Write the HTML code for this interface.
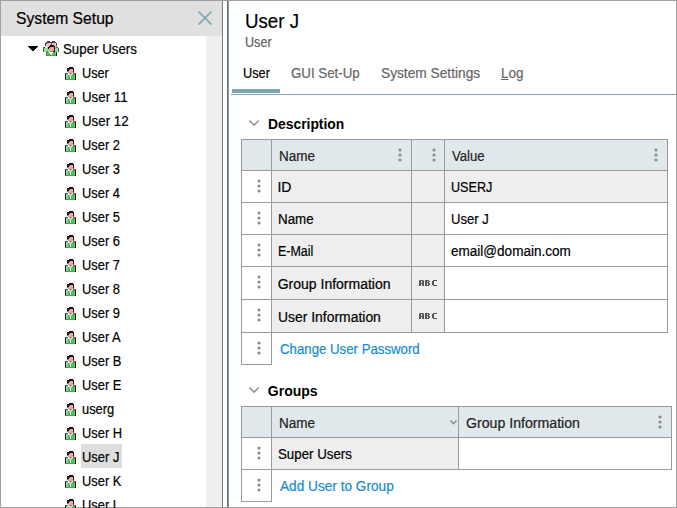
<!DOCTYPE html>
<html><head><meta charset="utf-8">
<style>
html,body{margin:0;padding:0;}
body{width:677px;height:508px;position:relative;overflow:hidden;background:#fff;font-family:"Liberation Sans",sans-serif;color:#000;}
.a{position:absolute;}
.t{position:absolute;white-space:pre;line-height:1;transform-origin:0 0;-webkit-text-stroke:0.2px currentColor;}
#frame{position:absolute;left:0;top:0;width:675px;height:506px;border:1px solid #a0a0a0;}
</style></head><body>
<svg width="0" height="0" style="position:absolute">
<defs>
<symbol id="usr" viewBox="0 0 11 13" shape-rendering="crispEdges"><rect x="4" y="0" width="4" height="1" fill="#161616"/><rect x="2" y="1" width="7" height="1" fill="#161616"/><rect x="2" y="2" width="3" height="1" fill="#161616"/><rect x="5" y="2" width="1" height="1" fill="#fcd0d0"/><rect x="6" y="2" width="2" height="1" fill="#f3a0a0"/><rect x="8" y="2" width="1" height="1" fill="#161616"/><rect x="2" y="3" width="2" height="1" fill="#161616"/><rect x="4" y="3" width="1" height="1" fill="#fcd0d0"/><rect x="5" y="3" width="3" height="1" fill="#f3a0a0"/><rect x="8" y="3" width="1" height="1" fill="#161616"/><rect x="2" y="4" width="1" height="1" fill="#5a5a5a"/><rect x="3" y="4" width="5" height="1" fill="#f3a0a0"/><rect x="8" y="4" width="1" height="1" fill="#161616"/><rect x="3" y="5" width="5" height="1" fill="#f3a0a0"/><rect x="8" y="5" width="1" height="1" fill="#5a5a5a"/><rect x="0" y="6" width="3" height="1" fill="#5a5a5a"/><rect x="3" y="6" width="1" height="1" fill="#ffffff"/><rect x="4" y="6" width="3" height="1" fill="#8a8a8a"/><rect x="7" y="6" width="1" height="1" fill="#ffffff"/><rect x="8" y="6" width="3" height="1" fill="#5a5a5a"/><rect x="0" y="7" width="1" height="1" fill="#161616"/><rect x="1" y="7" width="2" height="1" fill="#94dd94"/><rect x="3" y="7" width="2" height="1" fill="#ffffff"/><rect x="5" y="7" width="1" height="1" fill="#8a8a8a"/><rect x="6" y="7" width="1" height="1" fill="#ffffff"/><rect x="7" y="7" width="3" height="1" fill="#5cbf5e"/><rect x="10" y="7" width="1" height="1" fill="#161616"/><rect x="0" y="8" width="1" height="1" fill="#161616"/><rect x="1" y="8" width="2" height="1" fill="#94dd94"/><rect x="3" y="8" width="2" height="1" fill="#5cbf5e"/><rect x="5" y="8" width="1" height="1" fill="#ffffff"/><rect x="6" y="8" width="4" height="1" fill="#5cbf5e"/><rect x="10" y="8" width="1" height="1" fill="#161616"/><rect x="0" y="9" width="1" height="1" fill="#161616"/><rect x="1" y="9" width="2" height="1" fill="#94dd94"/><rect x="3" y="9" width="2" height="1" fill="#5cbf5e"/><rect x="5" y="9" width="1" height="1" fill="#ffffff"/><rect x="6" y="9" width="4" height="1" fill="#5cbf5e"/><rect x="10" y="9" width="1" height="1" fill="#161616"/><rect x="0" y="10" width="1" height="1" fill="#161616"/><rect x="1" y="10" width="1" height="1" fill="#94dd94"/><rect x="2" y="10" width="3" height="1" fill="#5cbf5e"/><rect x="5" y="10" width="1" height="1" fill="#ffffff"/><rect x="6" y="10" width="4" height="1" fill="#5cbf5e"/><rect x="10" y="10" width="1" height="1" fill="#161616"/><rect x="0" y="11" width="1" height="1" fill="#161616"/><rect x="1" y="11" width="1" height="1" fill="#94dd94"/><rect x="2" y="11" width="3" height="1" fill="#5cbf5e"/><rect x="5" y="11" width="1" height="1" fill="#ffffff"/><rect x="6" y="11" width="4" height="1" fill="#5cbf5e"/><rect x="10" y="11" width="1" height="1" fill="#161616"/><rect x="0" y="12" width="1" height="1" fill="#5a5a5a"/><rect x="1" y="12" width="9" height="1" fill="#45a847"/><rect x="10" y="12" width="1" height="1" fill="#161616"/></symbol>
<symbol id="grp" viewBox="0 0 16 15" shape-rendering="crispEdges"><rect x="4" y="0" width="3" height="1" fill="#484848"/><rect x="9" y="0" width="3" height="1" fill="#484848"/><rect x="3" y="1" width="10" height="1" fill="#484848"/><rect x="2" y="2" width="2" height="1" fill="#484848"/><rect x="4" y="2" width="4" height="1" fill="#f7b8b8"/><rect x="8" y="2" width="1" height="1" fill="#484848"/><rect x="9" y="2" width="4" height="1" fill="#f7b8b8"/><rect x="13" y="2" width="1" height="1" fill="#484848"/><rect x="2" y="3" width="1" height="1" fill="#484848"/><rect x="3" y="3" width="5" height="1" fill="#f7b8b8"/><rect x="8" y="3" width="1" height="1" fill="#484848"/><rect x="9" y="3" width="4" height="1" fill="#f7b8b8"/><rect x="13" y="3" width="1" height="1" fill="#484848"/><rect x="2" y="4" width="1" height="1" fill="#484848"/><rect x="3" y="4" width="4" height="1" fill="#f7b8b8"/><rect x="7" y="4" width="4" height="1" fill="#161616"/><rect x="11" y="4" width="2" height="1" fill="#f7b8b8"/><rect x="13" y="4" width="1" height="1" fill="#484848"/><rect x="4" y="5" width="2" height="1" fill="#f7b8b8"/><rect x="6" y="5" width="6" height="1" fill="#161616"/><rect x="12" y="5" width="2" height="1" fill="#f7b8b8"/><rect x="0" y="6" width="2" height="1" fill="#5a5a5a"/><rect x="2" y="6" width="1" height="1" fill="#94dd94"/><rect x="3" y="6" width="1" height="1" fill="#ffffff"/><rect x="4" y="6" width="1" height="1" fill="#94dd94"/><rect x="5" y="6" width="2" height="1" fill="#161616"/><rect x="7" y="6" width="4" height="1" fill="#f3a0a0"/><rect x="11" y="6" width="1" height="1" fill="#161616"/><rect x="12" y="6" width="1" height="1" fill="#94dd94"/><rect x="13" y="6" width="2" height="1" fill="#5a5a5a"/><rect x="0" y="7" width="1" height="1" fill="#5a5a5a"/><rect x="1" y="7" width="4" height="1" fill="#94dd94"/><rect x="5" y="7" width="1" height="1" fill="#161616"/><rect x="6" y="7" width="5" height="1" fill="#f3a0a0"/><rect x="11" y="7" width="1" height="1" fill="#161616"/><rect x="12" y="7" width="3" height="1" fill="#94dd94"/><rect x="15" y="7" width="1" height="1" fill="#5a5a5a"/><rect x="0" y="8" width="1" height="1" fill="#5a5a5a"/><rect x="1" y="8" width="5" height="1" fill="#94dd94"/><rect x="6" y="8" width="5" height="1" fill="#f3a0a0"/><rect x="11" y="8" width="1" height="1" fill="#161616"/><rect x="12" y="8" width="3" height="1" fill="#94dd94"/><rect x="15" y="8" width="1" height="1" fill="#5a5a5a"/><rect x="0" y="9" width="1" height="1" fill="#5a5a5a"/><rect x="1" y="9" width="6" height="1" fill="#94dd94"/><rect x="7" y="9" width="4" height="1" fill="#f3a0a0"/><rect x="11" y="9" width="1" height="1" fill="#161616"/><rect x="12" y="9" width="3" height="1" fill="#94dd94"/><rect x="15" y="9" width="1" height="1" fill="#5a5a5a"/><rect x="0" y="10" width="1" height="1" fill="#5a5a5a"/><rect x="1" y="10" width="3" height="1" fill="#94dd94"/><rect x="4" y="10" width="1" height="1" fill="#5a5a5a"/><rect x="5" y="10" width="2" height="1" fill="#94dd94"/><rect x="7" y="10" width="3" height="1" fill="#8a8a8a"/><rect x="10" y="10" width="2" height="1" fill="#161616"/><rect x="12" y="10" width="3" height="1" fill="#94dd94"/><rect x="15" y="10" width="1" height="1" fill="#5a5a5a"/><rect x="3" y="11" width="1" height="1" fill="#5a5a5a"/><rect x="4" y="11" width="2" height="1" fill="#5cbf5e"/><rect x="6" y="11" width="4" height="1" fill="#ffffff"/><rect x="10" y="11" width="3" height="1" fill="#5cbf5e"/><rect x="13" y="11" width="1" height="1" fill="#161616"/><rect x="3" y="12" width="1" height="1" fill="#5a5a5a"/><rect x="4" y="12" width="3" height="1" fill="#5cbf5e"/><rect x="7" y="12" width="2" height="1" fill="#ffffff"/><rect x="9" y="12" width="4" height="1" fill="#5cbf5e"/><rect x="13" y="12" width="1" height="1" fill="#161616"/><rect x="3" y="13" width="1" height="1" fill="#5a5a5a"/><rect x="4" y="13" width="4" height="1" fill="#5cbf5e"/><rect x="8" y="13" width="1" height="1" fill="#ffffff"/><rect x="9" y="13" width="4" height="1" fill="#5cbf5e"/><rect x="13" y="13" width="1" height="1" fill="#161616"/><rect x="3" y="14" width="1" height="1" fill="#5a5a5a"/><rect x="4" y="14" width="9" height="1" fill="#45a847"/><rect x="13" y="14" width="1" height="1" fill="#161616"/></symbol>
<symbol id="keb" viewBox="0 0 4 14">
<circle cx="2" cy="2" r="1.6" fill="#8c8c8c"/>
<circle cx="2" cy="7" r="1.6" fill="#8c8c8c"/>
<circle cx="2" cy="12" r="1.6" fill="#8c8c8c"/>
</symbol>
<symbol id="abc" viewBox="0 0 18 6" shape-rendering="crispEdges"><rect x="0" y="0" width="1" height="1" fill="#999"/><rect x="1" y="0" width="1" height="1" fill="#555"/><rect x="2" y="0" width="1" height="1" fill="#555"/><rect x="3" y="0" width="1" height="1" fill="#555"/><rect x="4" y="0" width="1" height="1" fill="#999"/><rect x="0" y="1" width="1" height="1" fill="#555"/><rect x="1" y="1" width="1" height="1" fill="#555"/><rect x="3" y="1" width="1" height="1" fill="#555"/><rect x="4" y="1" width="1" height="1" fill="#555"/><rect x="0" y="2" width="1" height="1" fill="#555"/><rect x="1" y="2" width="1" height="1" fill="#555"/><rect x="3" y="2" width="1" height="1" fill="#555"/><rect x="4" y="2" width="1" height="1" fill="#555"/><rect x="0" y="3" width="1" height="1" fill="#555"/><rect x="1" y="3" width="1" height="1" fill="#555"/><rect x="2" y="3" width="1" height="1" fill="#555"/><rect x="3" y="3" width="1" height="1" fill="#555"/><rect x="4" y="3" width="1" height="1" fill="#555"/><rect x="0" y="4" width="1" height="1" fill="#555"/><rect x="1" y="4" width="1" height="1" fill="#555"/><rect x="3" y="4" width="1" height="1" fill="#555"/><rect x="4" y="4" width="1" height="1" fill="#555"/><rect x="0" y="5" width="1" height="1" fill="#555"/><rect x="1" y="5" width="1" height="1" fill="#555"/><rect x="3" y="5" width="1" height="1" fill="#555"/><rect x="4" y="5" width="1" height="1" fill="#555"/><rect x="6" y="0" width="1" height="1" fill="#555"/><rect x="7" y="0" width="1" height="1" fill="#555"/><rect x="8" y="0" width="1" height="1" fill="#555"/><rect x="9" y="0" width="1" height="1" fill="#555"/><rect x="6" y="1" width="1" height="1" fill="#555"/><rect x="7" y="1" width="1" height="1" fill="#555"/><rect x="9" y="1" width="1" height="1" fill="#555"/><rect x="10" y="1" width="1" height="1" fill="#555"/><rect x="6" y="2" width="1" height="1" fill="#555"/><rect x="7" y="2" width="1" height="1" fill="#555"/><rect x="8" y="2" width="1" height="1" fill="#555"/><rect x="9" y="2" width="1" height="1" fill="#555"/><rect x="6" y="3" width="1" height="1" fill="#555"/><rect x="7" y="3" width="1" height="1" fill="#555"/><rect x="9" y="3" width="1" height="1" fill="#555"/><rect x="10" y="3" width="1" height="1" fill="#555"/><rect x="6" y="4" width="1" height="1" fill="#555"/><rect x="7" y="4" width="1" height="1" fill="#555"/><rect x="9" y="4" width="1" height="1" fill="#555"/><rect x="10" y="4" width="1" height="1" fill="#555"/><rect x="6" y="5" width="1" height="1" fill="#555"/><rect x="7" y="5" width="1" height="1" fill="#555"/><rect x="8" y="5" width="1" height="1" fill="#555"/><rect x="9" y="5" width="1" height="1" fill="#555"/><rect x="14" y="0" width="1" height="1" fill="#555"/><rect x="15" y="0" width="1" height="1" fill="#555"/><rect x="16" y="0" width="1" height="1" fill="#555"/><rect x="17" y="0" width="1" height="1" fill="#555"/><rect x="13" y="1" width="1" height="1" fill="#555"/><rect x="14" y="1" width="1" height="1" fill="#555"/><rect x="13" y="2" width="1" height="1" fill="#555"/><rect x="14" y="2" width="1" height="1" fill="#555"/><rect x="13" y="3" width="1" height="1" fill="#555"/><rect x="14" y="3" width="1" height="1" fill="#555"/><rect x="13" y="4" width="1" height="1" fill="#555"/><rect x="14" y="4" width="1" height="1" fill="#555"/><rect x="14" y="5" width="1" height="1" fill="#555"/><rect x="15" y="5" width="1" height="1" fill="#555"/><rect x="16" y="5" width="1" height="1" fill="#555"/><rect x="17" y="5" width="1" height="1" fill="#555"/></symbol>
</defs>
</svg>
<div id="frame"></div>
<div class="a" style="left:1px;top:1px;width:221px;height:35px;background:#e0e0e0;"></div>
<div class="t" style="left:16px;top:10px;font-size:16.5px;transform:scaleX(0.950);">System Setup</div>
<svg class="a" style="left:198px;top:11px" width="14" height="14" viewBox="0 0 14 14"><path d="M0.5 0.5L13.5 13.5M13.5 0.5L0.5 13.5" stroke="#7fa9b3" stroke-width="1.8"/></svg>
<div class="a" style="left:206px;top:36px;width:16px;height:471px;background:#efefef;"></div>
<div class="a" style="left:221px;top:36px;width:1px;height:471px;background:#f5f5f5;"></div>
<div class="a" style="left:222px;top:1px;width:1px;height:506px;background:#777;"></div>
<div class="a" style="left:227px;top:1px;width:1px;height:506px;background:#6a6a6a;"></div>
<div class="a" style="left:228px;top:1px;width:1px;height:506px;background:#7ea4ab;"></div>
<svg class="a" style="left:28px;top:46px" width="10" height="5" viewBox="0 0 10 5" shape-rendering="crispEdges"><path d="M0 0H10V1H9V2H8V3H7V4H6V5H4V4H3V3H2V2H1V1H0Z" fill="#000"/></svg>
<svg class="a" style="left:43px;top:41px" width="16" height="15"><use href="#grp"/></svg>
<div class="t" style="left:63.2px;top:42px;font-size:14px;transform:scaleX(0.950);">Super Users</div>
<div class="a" style="left:81px;top:444px;width:41px;height:24px;background:#dedede;"></div>
<svg class="a" style="left:65px;top:67px" width="11" height="13"><use href="#usr"/></svg>
<div class="t" style="left:82px;top:66px;font-size:14px;transform:scaleX(0.908);">User</div>
<svg class="a" style="left:65px;top:91px" width="11" height="13"><use href="#usr"/></svg>
<div class="t" style="left:82px;top:90px;font-size:14px;transform:scaleX(0.950);">User 11</div>
<svg class="a" style="left:65px;top:115px" width="11" height="13"><use href="#usr"/></svg>
<div class="t" style="left:82px;top:114px;font-size:14px;transform:scaleX(0.950);">User 12</div>
<svg class="a" style="left:65px;top:139px" width="11" height="13"><use href="#usr"/></svg>
<div class="t" style="left:82px;top:138px;font-size:14px;transform:scaleX(0.921);">User 2</div>
<svg class="a" style="left:65px;top:163px" width="11" height="13"><use href="#usr"/></svg>
<div class="t" style="left:82px;top:162px;font-size:14px;transform:scaleX(0.921);">User 3</div>
<svg class="a" style="left:65px;top:187px" width="11" height="13"><use href="#usr"/></svg>
<div class="t" style="left:82px;top:186px;font-size:14px;transform:scaleX(0.921);">User 4</div>
<svg class="a" style="left:65px;top:211px" width="11" height="13"><use href="#usr"/></svg>
<div class="t" style="left:82px;top:210px;font-size:14px;transform:scaleX(0.921);">User 5</div>
<svg class="a" style="left:65px;top:235px" width="11" height="13"><use href="#usr"/></svg>
<div class="t" style="left:82px;top:234px;font-size:14px;transform:scaleX(0.921);">User 6</div>
<svg class="a" style="left:65px;top:259px" width="11" height="13"><use href="#usr"/></svg>
<div class="t" style="left:82px;top:258px;font-size:14px;transform:scaleX(0.921);">User 7</div>
<svg class="a" style="left:65px;top:283px" width="11" height="13"><use href="#usr"/></svg>
<div class="t" style="left:82px;top:282px;font-size:14px;transform:scaleX(0.921);">User 8</div>
<svg class="a" style="left:65px;top:307px" width="11" height="13"><use href="#usr"/></svg>
<div class="t" style="left:82px;top:306px;font-size:14px;transform:scaleX(0.921);">User 9</div>
<svg class="a" style="left:65px;top:331px" width="11" height="13"><use href="#usr"/></svg>
<div class="t" style="left:82px;top:330px;font-size:14px;transform:scaleX(0.921);">User A</div>
<svg class="a" style="left:65px;top:355px" width="11" height="13"><use href="#usr"/></svg>
<div class="t" style="left:82px;top:354px;font-size:14px;transform:scaleX(0.921);">User B</div>
<svg class="a" style="left:65px;top:379px" width="11" height="13"><use href="#usr"/></svg>
<div class="t" style="left:82px;top:378px;font-size:14px;transform:scaleX(0.921);">User E</div>
<svg class="a" style="left:65px;top:403px" width="11" height="13"><use href="#usr"/></svg>
<div class="t" style="left:82px;top:402px;font-size:14px;transform:scaleX(0.921);">userg</div>
<svg class="a" style="left:65px;top:427px" width="11" height="13"><use href="#usr"/></svg>
<div class="t" style="left:82px;top:426px;font-size:14px;transform:scaleX(0.921);">User H</div>
<svg class="a" style="left:65px;top:451px" width="11" height="13"><use href="#usr"/></svg>
<div class="t" style="left:82px;top:450px;font-size:14px;transform:scaleX(0.924);">User J</div>
<svg class="a" style="left:65px;top:475px" width="11" height="13"><use href="#usr"/></svg>
<div class="t" style="left:82px;top:474px;font-size:14px;transform:scaleX(0.921);">User K</div>
<svg class="a" style="left:65px;top:499px" width="11" height="13"><use href="#usr"/></svg>
<div class="t" style="left:82px;top:498px;font-size:14px;transform:scaleX(0.921);">User L</div>
<div class="t" style="left:245.2px;top:10px;font-size:21px;transform:scaleX(0.890);">User J</div>
<div class="t" style="left:245.3px;top:35px;font-size:14px;transform:scaleX(0.900);color:#606060;">User</div>
<div class="t" style="left:243px;top:66px;font-size:14px;transform:scaleX(0.910);">User</div>
<div class="t" style="left:291px;top:66px;font-size:14px;transform:scaleX(0.950);color:#666;">GUI Set-Up</div>
<div class="t" style="left:381px;top:66px;font-size:14px;transform:scaleX(0.980);color:#666;">System Settings</div>
<div class="t" style="left:501px;top:66px;font-size:14px;transform:scaleX(0.960);color:#666;"><u>L</u>og</div>
<div class="a" style="left:232px;top:89px;width:48px;height:4px;background:#7fa6ae;"></div>
<div class="a" style="left:231px;top:94px;width:445px;height:1px;background:#7fa6ae;"></div>
<svg class="a" style="left:249px;top:120px" width="10" height="7" viewBox="0 0 10 7"><path d="M0.4 0.5L5 5.1L9.6 0.5" stroke="#959595" stroke-width="1.5" fill="none"/></svg>
<div class="t" style="left:267.5px;top:116.5px;font-size:14px;transform:scaleX(0.990);font-weight:bold;-webkit-text-stroke:0;">Description</div>
<div class="a" style="left:242px;top:140px;width:425px;height:30px;background:#e1e8eb;"></div>
<div class="a" style="left:272px;top:171px;width:139px;height:31px;background:#eeeeee;"></div>
<div class="a" style="left:412px;top:171px;width:32px;height:31px;background:#eeeeee;"></div>
<div class="a" style="left:445px;top:171px;width:222px;height:31px;background:#eeeeee;"></div>
<div class="a" style="left:272px;top:203px;width:139px;height:31px;background:#eeeeee;"></div>
<div class="a" style="left:412px;top:203px;width:32px;height:31px;background:#eeeeee;"></div>
<div class="a" style="left:272px;top:235px;width:139px;height:31px;background:#eeeeee;"></div>
<div class="a" style="left:412px;top:235px;width:32px;height:31px;background:#eeeeee;"></div>
<div class="a" style="left:272px;top:267px;width:139px;height:32px;background:#eeeeee;"></div>
<div class="a" style="left:412px;top:267px;width:32px;height:32px;background:#eeeeee;"></div>
<div class="a" style="left:272px;top:300px;width:139px;height:32px;background:#eeeeee;"></div>
<div class="a" style="left:412px;top:300px;width:32px;height:32px;background:#eeeeee;"></div>
<div class="a" style="left:241px;top:139px;width:427px;height:1px;background:#9a9a9a;"></div>
<div class="a" style="left:241px;top:170px;width:427px;height:1px;background:#9a9a9a;"></div>
<div class="a" style="left:241px;top:202px;width:427px;height:1px;background:#9a9a9a;"></div>
<div class="a" style="left:241px;top:234px;width:427px;height:1px;background:#9a9a9a;"></div>
<div class="a" style="left:241px;top:266px;width:427px;height:1px;background:#9a9a9a;"></div>
<div class="a" style="left:241px;top:299px;width:427px;height:1px;background:#9a9a9a;"></div>
<div class="a" style="left:241px;top:332px;width:427px;height:1px;background:#9a9a9a;"></div>
<div class="a" style="left:241px;top:139px;width:1px;height:194px;background:#9a9a9a;"></div>
<div class="a" style="left:271px;top:139px;width:1px;height:194px;background:#9a9a9a;"></div>
<div class="a" style="left:411px;top:139px;width:1px;height:194px;background:#9a9a9a;"></div>
<div class="a" style="left:444px;top:139px;width:1px;height:194px;background:#9a9a9a;"></div>
<div class="a" style="left:667px;top:139px;width:1px;height:194px;background:#9a9a9a;"></div>
<div class="a" style="left:241px;top:332px;width:1px;height:33px;background:#9a9a9a;"></div>
<div class="a" style="left:271px;top:332px;width:1px;height:33px;background:#9a9a9a;"></div>
<div class="a" style="left:241px;top:364px;width:31px;height:1px;background:#9a9a9a;"></div>
<div class="t" style="left:278.9px;top:149px;font-size:14px;transform:scaleX(0.964);color:#222;">Name</div>
<svg class="a" style="left:398px;top:148px" width="4" height="14"><use href="#keb"/></svg>
<svg class="a" style="left:432px;top:148px" width="4" height="14"><use href="#keb"/></svg>
<div class="t" style="left:451.9px;top:149px;font-size:14px;transform:scaleX(0.940);color:#222;">Value</div>
<svg class="a" style="left:654px;top:148px" width="4" height="14"><use href="#keb"/></svg>
<svg class="a" style="left:257px;top:179px" width="4" height="14"><use href="#keb"/></svg>
<div class="t" style="left:277.4px;top:180px;font-size:14px;">ID</div>
<div class="t" style="left:450.9px;top:180px;font-size:14px;transform:scaleX(0.900);">USERJ</div>
<svg class="a" style="left:257px;top:211px" width="4" height="14"><use href="#keb"/></svg>
<div class="t" style="left:277.9px;top:212px;font-size:14px;transform:scaleX(0.955);">Name</div>
<div class="t" style="left:450.9px;top:212px;font-size:14px;transform:scaleX(0.933);">User J</div>
<svg class="a" style="left:257px;top:243px" width="4" height="14"><use href="#keb"/></svg>
<div class="t" style="left:277.9px;top:244px;font-size:14px;transform:scaleX(0.887);">E-Mail</div>
<div class="t" style="left:450.9px;top:244px;font-size:14px;transform:scaleX(0.967);">email@domain.com</div>
<svg class="a" style="left:257px;top:275px" width="4" height="14"><use href="#keb"/></svg>
<div class="t" style="left:277.7px;top:277px;font-size:14px;">Group Information</div>
<svg class="a" style="left:419px;top:280px" width="18" height="6"><use href="#abc"/></svg>
<svg class="a" style="left:257px;top:308px" width="4" height="14"><use href="#keb"/></svg>
<div class="t" style="left:277.9px;top:310px;font-size:14px;transform:scaleX(0.994);">User Information</div>
<svg class="a" style="left:419px;top:313px" width="18" height="6"><use href="#abc"/></svg>
<svg class="a" style="left:257px;top:341px" width="4" height="14"><use href="#keb"/></svg>
<div class="t" style="left:280.2px;top:342px;font-size:14px;transform:scaleX(0.945);color:#178bcf;">Change User Password</div>
<svg class="a" style="left:249px;top:387px" width="10" height="7" viewBox="0 0 10 7"><path d="M0.4 0.5L5 5.1L9.6 0.5" stroke="#959595" stroke-width="1.5" fill="none"/></svg>
<div class="t" style="left:267.8px;top:384px;font-size:14px;font-weight:bold;-webkit-text-stroke:0;">Groups</div>
<div class="a" style="left:242px;top:407px;width:429px;height:30px;background:#e1e8eb;"></div>
<div class="a" style="left:272px;top:438px;width:186px;height:31px;background:#eeeeee;"></div>
<div class="a" style="left:241px;top:406px;width:431px;height:1px;background:#9a9a9a;"></div>
<div class="a" style="left:241px;top:437px;width:431px;height:1px;background:#9a9a9a;"></div>
<div class="a" style="left:241px;top:469px;width:431px;height:1px;background:#9a9a9a;"></div>
<div class="a" style="left:241px;top:406px;width:1px;height:64px;background:#9a9a9a;"></div>
<div class="a" style="left:271px;top:406px;width:1px;height:64px;background:#9a9a9a;"></div>
<div class="a" style="left:458px;top:406px;width:1px;height:64px;background:#9a9a9a;"></div>
<div class="a" style="left:671px;top:406px;width:1px;height:64px;background:#9a9a9a;"></div>
<div class="a" style="left:241px;top:469px;width:1px;height:33px;background:#9a9a9a;"></div>
<div class="a" style="left:271px;top:469px;width:1px;height:33px;background:#9a9a9a;"></div>
<div class="a" style="left:241px;top:501px;width:31px;height:1px;background:#9a9a9a;"></div>
<div class="t" style="left:278.9px;top:416px;font-size:14px;transform:scaleX(0.964);color:#222;">Name</div>
<svg class="a" style="left:450px;top:420px" width="7" height="5" viewBox="0 0 7 5"><path d="M0.5 0.5L3.5 3.8L6.5 0.5" stroke="#888" stroke-width="1.3" fill="none"/></svg>
<div class="t" style="left:466px;top:416px;font-size:14px;transform:scaleX(1.010);color:#222;">Group Information</div>
<svg class="a" style="left:658px;top:415px" width="4" height="14"><use href="#keb"/></svg>
<svg class="a" style="left:257px;top:446px" width="4" height="14"><use href="#keb"/></svg>
<div class="t" style="left:278px;top:447px;font-size:14px;transform:scaleX(0.950);">Super Users</div>
<svg class="a" style="left:257px;top:478px" width="4" height="14"><use href="#keb"/></svg>
<div class="t" style="left:279.9px;top:479px;font-size:14px;transform:scaleX(0.975);color:#178bcf;">Add User to Group</div>
</body></html>
